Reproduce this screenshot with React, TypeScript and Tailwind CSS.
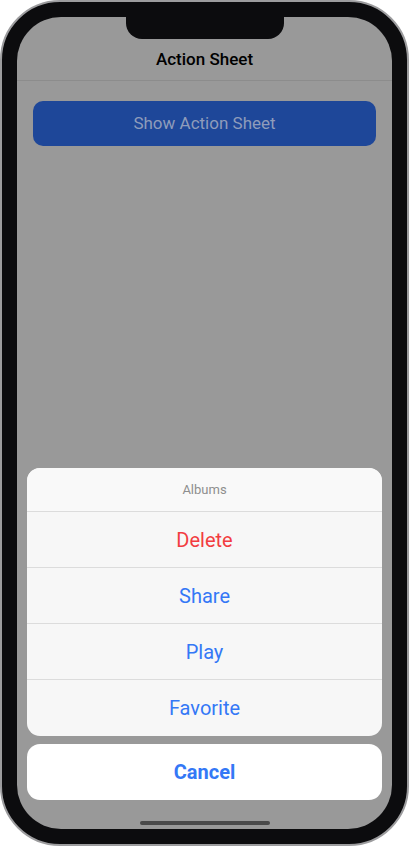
const actions = [
    { label: 'Delete', color: 'text-[#f23c40]' },
    { label: 'Share', color: 'text-[#3478f6]' },
    { label: 'Play', color: 'text-[#3478f6]' },
    { label: 'Favorite', color: 'text-[#3478f6]' },
];

const App = () => {
    return (
        <div className="w-[409px] h-[847px] bg-white" style={{ fontFamily: 'Roboto, "Noto Sans", sans-serif' }}>
            <div className="w-[409px] h-[846px] rounded-[60px] border-2 border-[#9c9c9e] bg-[#0c0c0e] p-[15px]">
                <div className="relative h-full rounded-[44px] bg-[#999999] overflow-hidden flex flex-col">
                    {/* notch */}
                    <div className="absolute top-0 left-[109px] w-[158px] h-[22px] bg-[#0c0c0e] rounded-b-[16px]" />

                    <div className="h-[64px] pt-[31px] border-b border-[#8c8c8c] text-center">
                        <div className="text-[17px] leading-[22px] font-medium text-black">Action Sheet</div>
                    </div>

                    <div className="px-4 pt-5">
                        <div className="h-[45px] rounded-[10px] bg-[#1e4799] flex items-center justify-center text-[17px] text-[#8f9cbb]">
                            Show Action Sheet
                        </div>
                    </div>

                    <div className="flex-1" />

                    <div className="px-[10px] flex flex-col gap-2">
                        <div className="rounded-[13px] overflow-hidden bg-[#f7f7f7] pb-px">
                            <div className="h-[43px] flex items-center justify-center text-[13px] text-[#8e8e8e] bg-[#f9f9f9]">
                                Albums
                            </div>
                            {actions.map((a) => (
                                <div key={a.label} className={`h-[56px] border-t border-[#dcdcdc] flex items-center justify-center text-[20px] ${a.color}`}>
                                    {a.label}
                                </div>
                            ))}
                        </div>
                        <div className="h-[56px] rounded-[13px] bg-white flex items-center justify-center text-[20px] font-bold text-[#3478f6]">
                            Cancel
                        </div>
                    </div>

                    <div className="h-[29px] flex items-start justify-center pt-[21px]">
                        <div className="w-[130px] h-[4px] rounded-full bg-[#4a4a4a]" />
                    </div>
                </div>
            </div>
        </div>
    );
};

export default App;
